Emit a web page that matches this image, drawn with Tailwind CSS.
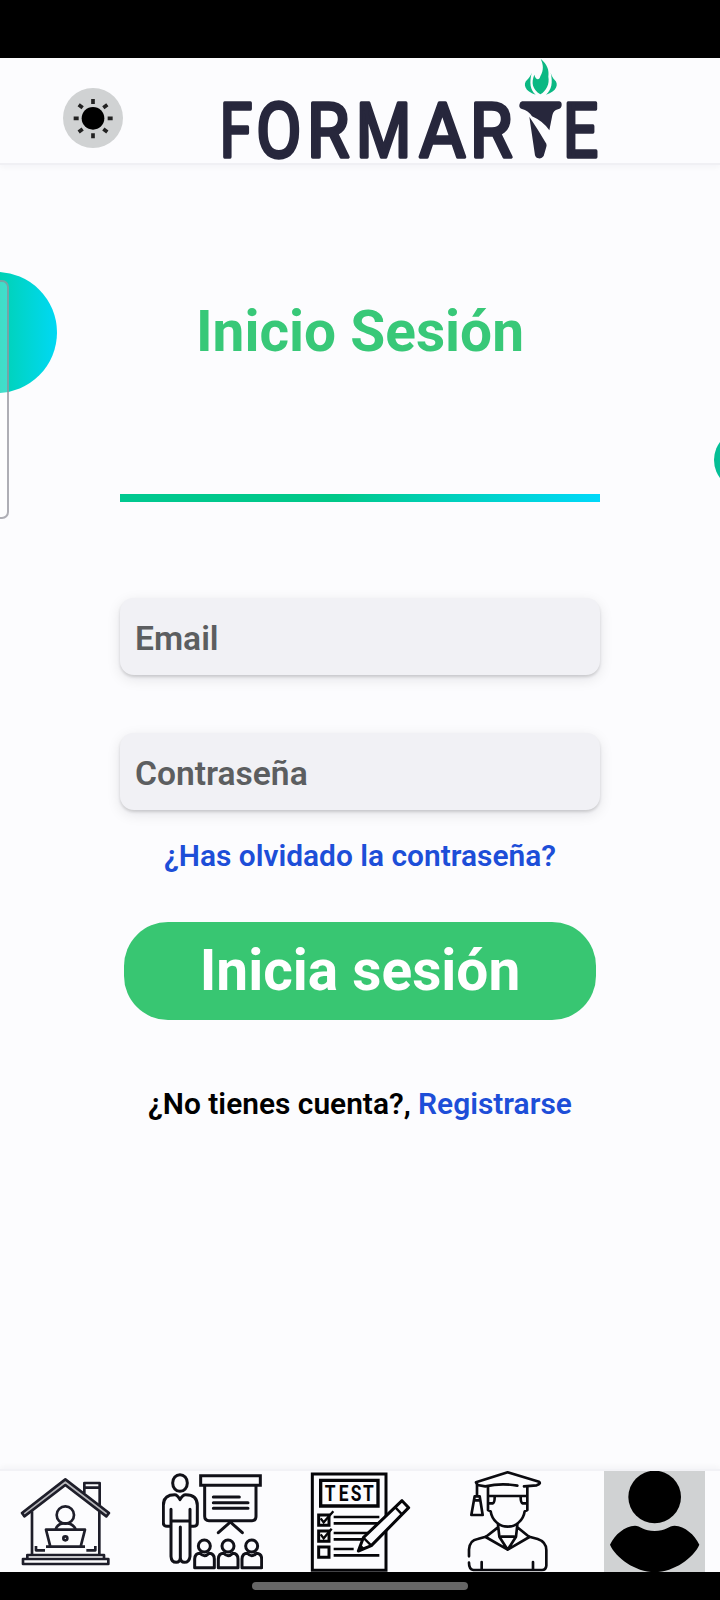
<!DOCTYPE html>
<html lang="es">
<head>
<meta charset="utf-8">
<meta name="viewport" content="width=device-width, initial-scale=1">
<title>Formarte - Inicio Sesión</title>
<script src="https://cdn.jsdelivr.net/npm/@tailwindcss/browser@4"></script>
</head>
<body class="bg-[#fcfcfe] font-['Roboto',sans-serif] text-black">
<div class="relative flex h-[1600px] w-[720px] flex-col overflow-hidden">
  <div class="h-[58px] shrink-0 bg-black"></div>

  <header class="flex h-[107px] shrink-0 items-start border-b-2 border-[#f0f0f4] pl-[63px] shadow-[0_2px_6px_rgba(0,0,40,0.04)]">
    <button class="mt-[30px] size-[60px] rounded-full bg-[#d0d2d3]" aria-label="Tema">
      <svg class="size-[60px]" viewBox="0 0 180 180">
        <circle cx="90" cy="91" r="34"/>
        <g stroke="#222" stroke-width="11">
          <path d="M90 33v15M90 136v15M32 91h15M134 91h15M47 50l12 9M121 59l12-9M47 132l12-9M121 123l12 9"/>
        </g>
      </svg>
    </button>
    <svg class="ml-[97px] h-[105px] w-[384px] overflow-visible" viewBox="30 24 1152 315" role="img" aria-label="FORMARTE">
      <g font-family="Roboto, sans-serif" font-weight="400" font-size="226" fill="#27273c" stroke="#27273c" stroke-width="11" stroke-linejoin="round">
        <text transform="translate(29 321) scale(.78 1)">F</text>
        <text transform="translate(139 321) scale(.87 1)">O</text>
        <text transform="translate(291 321) scale(.91 1)">R</text>
        <text transform="translate(438 321) scale(.84 1)">M</text>
        <text transform="translate(628 321) scale(.94 1)">A</text>
        <text transform="translate(780 321) scale(.91 1)">R</text>
        <text transform="translate(1059 321) scale(.82 1)">E</text>
      </g>
      <g fill="#27273c">
        <path d="M936 154H1048Q1056 156 1055 166T1044 178Q1030 181 1027 196L1018 241Q1000 214 966 199Q954 181 936 177Q927 174 928 165T936 154Z"/>
        <path d="M958 200Q985 240 1009 281Q1011 286 1008 294L1001 318Q995 327 986 325Q978 325 975 316Z"/>
      </g>
      <g fill="#0bb883">
        <path d="M992 26C1012 43 1018 60 1015 80C1019 101 1010 122 991 133C967 118 963 98 973 74C977 90 988 92 991 79C1002 60 1000 43 992 26Z"/>
        <path d="M965 68C958 98 960 119 977 134C944 125 938 101 951 90C957 84 962 77 965 68Z"/>
        <path d="M1022 68C1029 98 1025 119 1008 134C1041 125 1047 101 1034 90C1028 84 1025 77 1022 68Z"/>
      </g>
    </svg>
  </header>

  <main class="flex grow flex-col items-center">
    <h1 class="mt-[133px] h-[68px] whitespace-nowrap text-[56.8px] leading-[68px] font-bold text-[#38c878]">Inicio Sesión</h1>
    <div class="mt-[128px] h-2 w-[480px] bg-linear-to-r from-[#00c890] via-[#00c888] via-45% to-[#00d8fa]"></div>

    <form class="flex flex-col items-center">
      <input type="email" placeholder="Email" class="mt-[96px] h-[77px] w-[480px] rounded-[14px] bg-[#f1f1f5] px-[15px] pt-[4px] text-[33.6px] font-semibold shadow-[0_2px_3px_rgba(0,0,0,0.14),0_4px_14px_rgba(0,0,30,0.10)] placeholder:text-[#5c5e60]">
      <input type="password" placeholder="Contraseña" class="mt-[58px] h-[77px] w-[480px] rounded-[14px] bg-[#f1f1f5] px-[15px] pt-[4px] text-[33.6px] font-semibold shadow-[0_2px_3px_rgba(0,0,0,0.14),0_4px_14px_rgba(0,0,30,0.10)] placeholder:text-[#5c5e60]">
      <a class="mt-[28px] h-9 text-[29.9px] leading-9 font-semibold whitespace-nowrap text-[#1d4ed8]">¿Has olvidado la contraseña?</a>
      <button type="button" class="mt-[48px] h-[98px] w-[472px] rounded-[44px] bg-[#38c672] text-[56.8px] leading-none font-bold text-white">Inicia sesión</button>
    </form>
    <p class="mt-[66px] text-[29.9px] leading-9 font-semibold whitespace-nowrap">¿No tienes cuenta?, <a class="text-[#1d4ed8]">Registrarse</a></p>
  </main>

  <nav class="flex h-[103px] shrink-0 items-end justify-between border-t-2 border-[#f2f2f6] px-[15px] shadow-[0_-2px_6px_rgba(0,0,40,0.04)]">
    <!-- Casa -->
    <svg class="size-[101px]" viewBox="45 63 303 303" fill="none" stroke="#1e1e2a" stroke-width="8" stroke-linejoin="round">
      <path fill="#b8b8bc" d="M196 88L66 189L73 199L196 105L319 199L327 189Z"/>
      <path d="M96 184V314M298 184V314M253 129V99H299V165M253 113H299"/>
      <circle cx="196" cy="195" r="26"/>
      <path d="M166 239Q172 222 189 220H203Q220 222 228 239M138 239H255L242 290H151ZM138 290H255"/>
      <circle cx="196" cy="265" r="6"/>
      <path d="M108 288V301H135M259 301H286V288M82 327V315H312V327M69 327H325V342H69Z"/>
    </svg>
    <!-- Clases -->
    <svg class="size-[101px]" viewBox="486 63 303 303" fill="none" stroke="#111118" stroke-width="9" stroke-linejoin="round" stroke-linecap="round">
      <ellipse cx="540" cy="99" rx="22" ry="25"/>
      <path d="M524 134Q532 134 540 149Q548 134 557 134Q592 134 592 166V218Q592 229 581 229H570V178M524 134Q490 134 490 166V218Q490 229 501 229H513V178M513 229V319Q514 337 529 337Q540 337 541 323V231M570 229V319Q568 337 553 337Q542 337 541 323M513 213H570"/>
      <path stroke-linejoin="miter" d="M602 77H781V106H602Z"/>
      <path d="M614 108V199Q614 212 627 212H756Q768 212 768 199V108M640 141H718M640 158H744M640 175H744M691 216L655 248M691 216L727 248"/>
      <circle cx="613" cy="288" r="18"/><circle cx="684" cy="288" r="18"/><circle cx="755" cy="288" r="18"/>
      <path d="M584 353V327Q585 310 600 310Q613 324 627 310Q643 311 643 327V353ZM655 353V327Q656 310 671 310Q684 324 698 310Q714 311 714 327V353ZM726 353V327Q727 310 742 310Q755 324 769 310Q785 311 785 327V353Z"/>
    </svg>
    <!-- Test -->
    <svg class="size-[101px]" viewBox="89 63 303 303" fill="none" stroke="#050508" stroke-width="9">
      <path d="M96 72H317V361H96Z"/>
      <path stroke-width="10" d="M121 91H293V168H121Z"/>
      <text transform="scale(.8 1)" x="187 237 284 330" y="153" text-anchor="middle" font-family="Roboto, sans-serif" font-weight="700" font-size="65" fill="#050508" stroke="none">TEST</text>
      <path d="M115 195H146V226H115ZM115 243H146V274H115ZM115 291H146V322H115Z"/>
      <path stroke-width="7" d="M121 205L130 217L159 184M121 253L130 265L154 236"/>
      <path stroke-width="8" d="M160 201H297M160 220H297M160 249H280M160 268H250M160 297H220M160 316H297"/>
      <path fill="#fcfcfe" stroke-linejoin="round" d="M365 152L385 173L273 287L234 303L249 263Z"/>
      <path stroke-width="7" d="M345 172L365 193M249 263L273 287"/>
      <path fill="#050508" stroke="none" d="M234 303L240 282L254 296Z"/>
    </svg>
    <!-- Estudiante -->
    <svg class="size-[101px]" viewBox="51 63 303 303" fill="none" stroke="#0b0b10" stroke-width="8" stroke-linejoin="round" stroke-linecap="round">
      <path d="M252 109L290 106Q304 101 297 95L203 67L108 97L112 105L136 109Q185 98 232 107M111 99V136M104 139H119L128 195H94ZM104 151H119"/>
      <path d="M144 111V180L152 184C156 211 178 230 203 230S250 211 254 184L262 180V111M145 138H262M148 160H158Q164 159 164 142M258 160H248Q242 159 242 142"/>
      <path d="M174 224L178 260L203 299L228 260L232 224M174 232L137 261L203 299L268 261L232 232M184 260H222"/>
      <path d="M87 319V299Q89 270 113 267L137 260M268 260L293 267Q319 276 319 300V347Q318 360 306 360H100Q87 358 87 338M125 336V359M279 336V359"/>
    </svg>
    <!-- Perfil -->
    <svg class="size-[101px] bg-[#d0d2d3]" viewBox="492 63 303 303">
      <circle cx="644" cy="141" r="79"/>
      <path d="M585 227C600 227 612 243 644 243S687 227 704 227C735 229 763 253 778 284C761 323 703 366 644 366S527 323 510 284C525 253 553 229 585 227Z"/>
    </svg>
  </nav>
  <div class="flex h-7 shrink-0 justify-center bg-black pt-[10px]"><div class="h-2 w-[216px] rounded-full bg-[#666]"></div></div>

  <!-- Adornos que sobresalen de los bordes -->
  <div class="absolute top-[272px] -left-[64px] size-[121px] rounded-full bg-linear-to-r from-[#00c864] to-[#00d8f4]"></div>
  <div class="absolute top-[280px] -left-[20px] h-[239px] w-[29px] rounded-[7px] border-2 border-[#8c8c96]/70 bg-white/25"></div>
  <div class="absolute top-[430px] left-[714px] size-[60px] rounded-full bg-linear-to-r from-[#06bd90] to-[#00d8f4]"></div>
</div>
</body>
</html>
